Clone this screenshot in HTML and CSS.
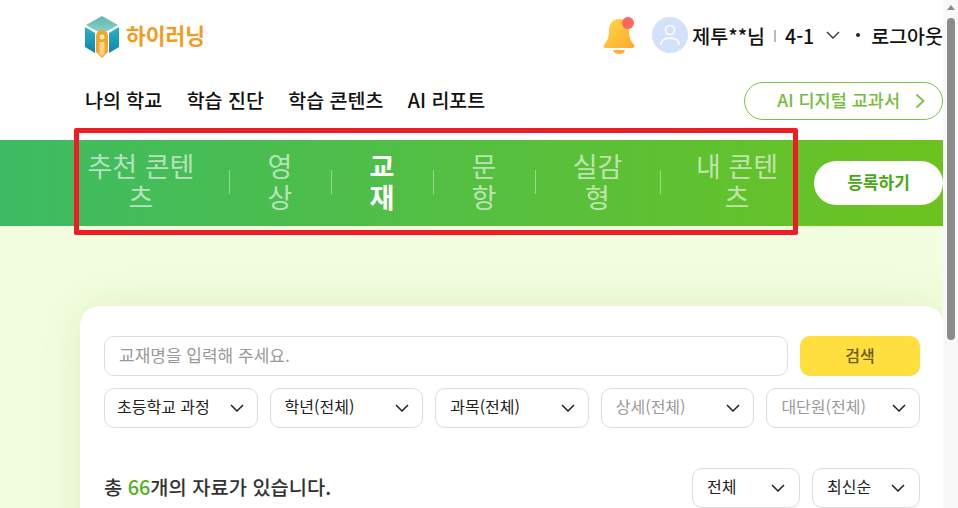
FILE: index.html
```html
<!DOCTYPE html>
<html lang="ko">
<head>
  <meta charset="UTF-8" />
  <meta name="viewport" content="width=device-width, initial-scale=1.0" />
  <title>하이러닝 교재</title>
  <link rel="stylesheet" href="styles.css">
</head>
<body>
  <div class="page">
    <header class="top">
      <a class="logo">
        <svg class="logo-icon" width="34" height="42" viewBox="0 0 34 42">
          <defs>
            <linearGradient id="cubeTop" x1="0" y1="0" x2="0" y2="1">
              <stop offset="0" stop-color="#5fb8a8" />
              <stop offset="1" stop-color="#8fd3cf" />
            </linearGradient>
            <linearGradient id="cubeSide" x1="0" y1="0" x2="0" y2="1">
              <stop offset="0" stop-color="#2fb2c0" />
              <stop offset="1" stop-color="#0b86b0" />
            </linearGradient>
          </defs>
          <path d="M17 0 L33 9 L17 18 L1 9 Z" fill="url(#cubeTop)" />
          <path d="M0 11 L10 17 L10 37 L0 31 Z" fill="url(#cubeSide)" />
          <path d="M34 11 L24 17 L24 37 L34 31 Z" fill="url(#cubeSide)" />
          <path d="M17 14 C21 14 23 17 23 21 L23 36 L17 42 L11 36 L11 21 C11 17 13 14 17 14 Z" fill="#f5a623" />
          <path d="M14.5 26 L19.5 26 L19.5 38 L17 40 L14.5 38 Z" fill="#fbd38d" />
          <circle cx="17" cy="21" r="2.4" fill="#fff3d6" />
        </svg>
        <span class="logo-text">하이러닝</span>
      </a>
      <div class="user">
        <svg class="bell" width="34" height="38" viewBox="0 0 34 38">
          <defs>
            <linearGradient id="bellFill" x1="0" y1="0" x2="1" y2="1">
              <stop offset="0" stop-color="#ffd84d" />
              <stop offset="1" stop-color="#ffa927" />
            </linearGradient>
          </defs>
          <path d="M16 3 C23 3 26 8 26 15 C26 22 28 25 31 29 C32 31 31 32 29 32 L3 32 C1 32 0 31 1 29 C4 25 6 22 6 15 C6 8 9 3 16 3 Z" fill="url(#bellFill)" />
          <path d="M10 34 L22 34 C21 37 19 38 16 38 C13 38 11 37 10 34 Z" fill="#ffb02e" />
          <circle cx="25" cy="7" r="6" fill="#ff6660" />
        </svg>
        <span class="avatar">
          <svg width="20" height="22" viewBox="0 0 20 22" fill="none" stroke="#fff" stroke-width="1.5">
            <circle cx="10" cy="6" r="4.5" />
            <path d="M1 21 C1 16 5 14 10 14 C15 14 19 16 19 21" />
          </svg>
        </span>
        <span class="name">제투**님</span>
        <span class="bar"></span>
        <span class="grade">4-1</span>
        <svg class="grade-arrow" width="14" height="8" viewBox="0 0 14 8" fill="none" stroke="#333" stroke-width="1.4">
          <path d="M1 1 L7 7 L13 1" />
        </svg>
        <span class="dot"></span>
        <a class="logout">로그아웃</a>
      </div>
    </header>

    <nav class="menu">
      <ul class="menu-list">
        <li>나의 학교</li>
        <li>학습 진단</li>
        <li>학습 콘텐츠</li>
        <li>AI 리포트</li>
      </ul>
      <a class="ai-btn">
        AI 디지털 교과서
        <svg width="10" height="16" viewBox="0 0 10 16" fill="none" stroke="#7cc242" stroke-width="1.8">
          <path d="M1.5 1.5 L8.5 8 L1.5 14.5" />
        </svg>
      </a>
    </nav>

    <section class="band">
      <ul class="tabs">
        <li class="tab">추천 콘텐츠</li>
        <li class="tab">영상</li>
        <li class="tab active">교재</li>
        <li class="tab">문항</li>
        <li class="tab">실감형</li>
        <li class="tab">내 콘텐츠</li>
      </ul>
      <a class="reg-btn">등록하기</a>
      <div class="mark"></div>
    </section>

    <main class="content">
      <div class="card">
        <div class="search-row">
          <div class="search-input">교재명을 입력해 주세요.</div>
          <button class="search-btn">검색</button>
        </div>
        <div class="filter-row">
          <div class="select"><span>초등학교 과정</span><svg class="arrow" viewBox="0 0 14 8"><path d="M1 1 L7 7 L13 1" /></svg></div>
          <div class="select"><span>학년(전체)</span><svg class="arrow" viewBox="0 0 14 8"><path d="M1 1 L7 7 L13 1" /></svg></div>
          <div class="select"><span>과목(전체)</span><svg class="arrow" viewBox="0 0 14 8"><path d="M1 1 L7 7 L13 1" /></svg></div>
          <div class="select off"><span>상세(전체)</span><svg class="arrow" viewBox="0 0 14 8"><path d="M1 1 L7 7 L13 1" /></svg></div>
          <div class="select off"><span>대단원(전체)</span><svg class="arrow" viewBox="0 0 14 8"><path d="M1 1 L7 7 L13 1" /></svg></div>
        </div>
        <div class="list-head">
          <p class="total">총 <em>66</em>개의 자료가 있습니다.</p>
          <div class="sorts">
            <div class="select small"><span>전체</span><svg class="arrow" viewBox="0 0 14 8"><path d="M1 1 L7 7 L13 1" /></svg></div>
            <div class="select small"><span>최신순</span><svg class="arrow" viewBox="0 0 14 8"><path d="M1 1 L7 7 L13 1" /></svg></div>
          </div>
        </div>
      </div>
    </main>
  </div>

  <div class="scrollbar">
    <span class="scroll-up"></span>
    <span class="scroll-thumb"></span>
  </div>
</body>
</html>
```

FILE: styles.css
```css
* {
  box-sizing: border-box;
}
html, body {
  height: 508px;
  overflow: hidden;
}
body {
  margin: 0;
  display: flex;
  font-family: "Noto Sans CJK KR", "Noto Sans", sans-serif;
  color: #111;
  background: #fff;
}
ul {
  list-style: none;
  margin: 0;
  padding: 0;
}
.page {
  width: 943px;
  flex: none;
  height: 508px;
  overflow: hidden;
}

/* top */
.top {
  height: 72px;
  padding: 15px 0 0 85px;
  display: flex;
  justify-content: space-between;
}
.logo {
  display: flex;
  align-items: flex-start;
  gap: 7px;
}
.logo-icon {
  margin-top: 1px;
}
.logo-text {
  font-size: 21.5px;
  font-weight: 700;
  line-height: 40px;
  color: #f29c1f;
}
.user {
  display: flex;
  align-items: center;
  height: 40px;
  white-space: nowrap;
  font-size: 19.5px;
  font-weight: 500;
}
.bell {
  margin-right: 15px;
}
.avatar {
  width: 36px;
  height: 36px;
  border-radius: 50%;
  background: #d3e1fa;
  display: flex;
  align-items: center;
  justify-content: center;
  margin-right: 4px;
}
.bar {
  width: 2px;
  height: 12px;
  background: #bbb;
  margin: 2px 9px 0 9px;
}
.grade-arrow {
  margin: 0 16px 0 12px;
}
.dot {
  width: 4px;
  height: 4px;
  border-radius: 50%;
  background: #222;
  margin-right: 11px;
}

/* menu */
.menu {
  height: 68px;
  padding: 10px 0 0 85px;
  display: flex;
  justify-content: space-between;
}
.menu-list {
  display: flex;
  gap: 24.4px;
  height: 34px;
  align-items: center;
  font-size: 19.5px;
  font-weight: 500;
}
.ai-btn {
  width: 199px;
  height: 38px;
  border: 1.5px solid #7cc242;
  border-radius: 19px;
  display: flex;
  align-items: center;
  justify-content: flex-end;
  gap: 15px;
  padding: 0 17px 3px 0;
  color: #74bd3b;
  font-size: 17.5px;
  font-weight: 500;
}
.ai-btn svg {
  margin-top: 3px;
}

/* green band */
.band {
  position: relative;
  height: 86px;
  background: linear-gradient(90deg, #3dbb63, #6cc31f);
  display: flex;
  align-items: center;
  padding-left: 53px;
}
.tabs {
  display: grid;
  grid-template-columns: 176px 102px 102px 102px 125px 154px;
  margin-top: -5px;
}
.tab {
  position: relative;
  padding: 0 32px;
  text-align: center;
  font-size: 27px;
  line-height: 31px;
  color: rgba(255, 255, 255, 0.6);
}
.tab + .tab::before {
  content: "";
  position: absolute;
  left: 0;
  top: 20px;
  height: 24px;
  width: 1px;
  background: rgba(255, 255, 255, 0.4);
}
.tab.active {
  color: #fff;
  font-weight: 700;
}
.reg-btn {
  width: 130px;
  height: 44px;
  border-radius: 22px;
  background: #fff;
  color: #46a915;
  font-size: 17px;
  font-weight: 700;
  display: flex;
  align-items: center;
  justify-content: center;
  padding-bottom: 4px;
}
.mark {
  position: absolute;
  left: 74px;
  top: -12px;
  width: 724px;
  height: 107px;
  border: 5px solid #ee1c25;
  border-radius: 2px;
}

/* content */
.content {
  height: 282px;
  background: #f3fde0;
  padding: 80px 0 0 80px;
}
.card {
  width: 864px;
  height: 300px;
  background: #fff;
  border-radius: 20px;
  padding: 30px 24px;
  box-shadow: 0 0 50px rgba(130, 190, 60, 0.18);
}
.search-row {
  display: flex;
  gap: 12px;
}
.search-input {
  flex: 1;
  height: 40px;
  border: 1px solid #ddd;
  border-radius: 10px;
  padding-left: 14px;
  line-height: 36px;
  font-size: 17px;
  color: #999;
}
.search-btn {
  width: 120px;
  height: 40px;
  border: none;
  border-radius: 10px;
  background: #ffdf3d;
  color: #6b5a12;
  font-family: inherit;
  font-size: 16px;
  font-weight: 500;
  padding-bottom: 3px;
}
.filter-row {
  display: grid;
  grid-template-columns: repeat(5, 1fr);
  gap: 12px;
  margin-top: 12px;
}
.select {
  height: 40px;
  border: 1px solid #ddd;
  border-radius: 10px;
  display: flex;
  align-items: center;
  justify-content: space-between;
  padding: 0 13px 0 14px;
  font-size: 16px;
  color: #222;
  white-space: nowrap;
}
.select:first-child {
  padding-left: 12px;
}
.select span {
  margin-bottom: 4px;
}
.select.off {
  color: #999;
}
.arrow {
  width: 14px;
  height: 8px;
  fill: none;
  stroke: #222;
  stroke-width: 1.5;
  flex: none;
}
.list-head {
  display: flex;
  justify-content: space-between;
  margin-top: 40px;
}
.total {
  margin: 0;
  font-size: 19.8px;
  font-weight: 500;
  line-height: 38px;
  color: #333;
}
.total em {
  font-style: normal;
  color: #53b01a;
}
.sorts {
  display: flex;
  gap: 12px;
}
.select.small,
.select.small:first-child {
  width: 108px;
  padding: 0 14px;
}

/* scrollbar */
.scrollbar {
  flex: 1;
  background: #f8f8f8;
  display: flex;
  flex-direction: column;
  align-items: center;
  padding-top: 5px;
}
.scroll-up {
  width: 0;
  height: 0;
  border: 4px solid transparent;
  border-top: none;
  border-bottom: 5px solid #8c8c8c;
}
.scroll-thumb {
  width: 8px;
  height: 322px;
  margin-top: 8px;
  border-radius: 4px;
  background: #8c8c8c;
}
```
